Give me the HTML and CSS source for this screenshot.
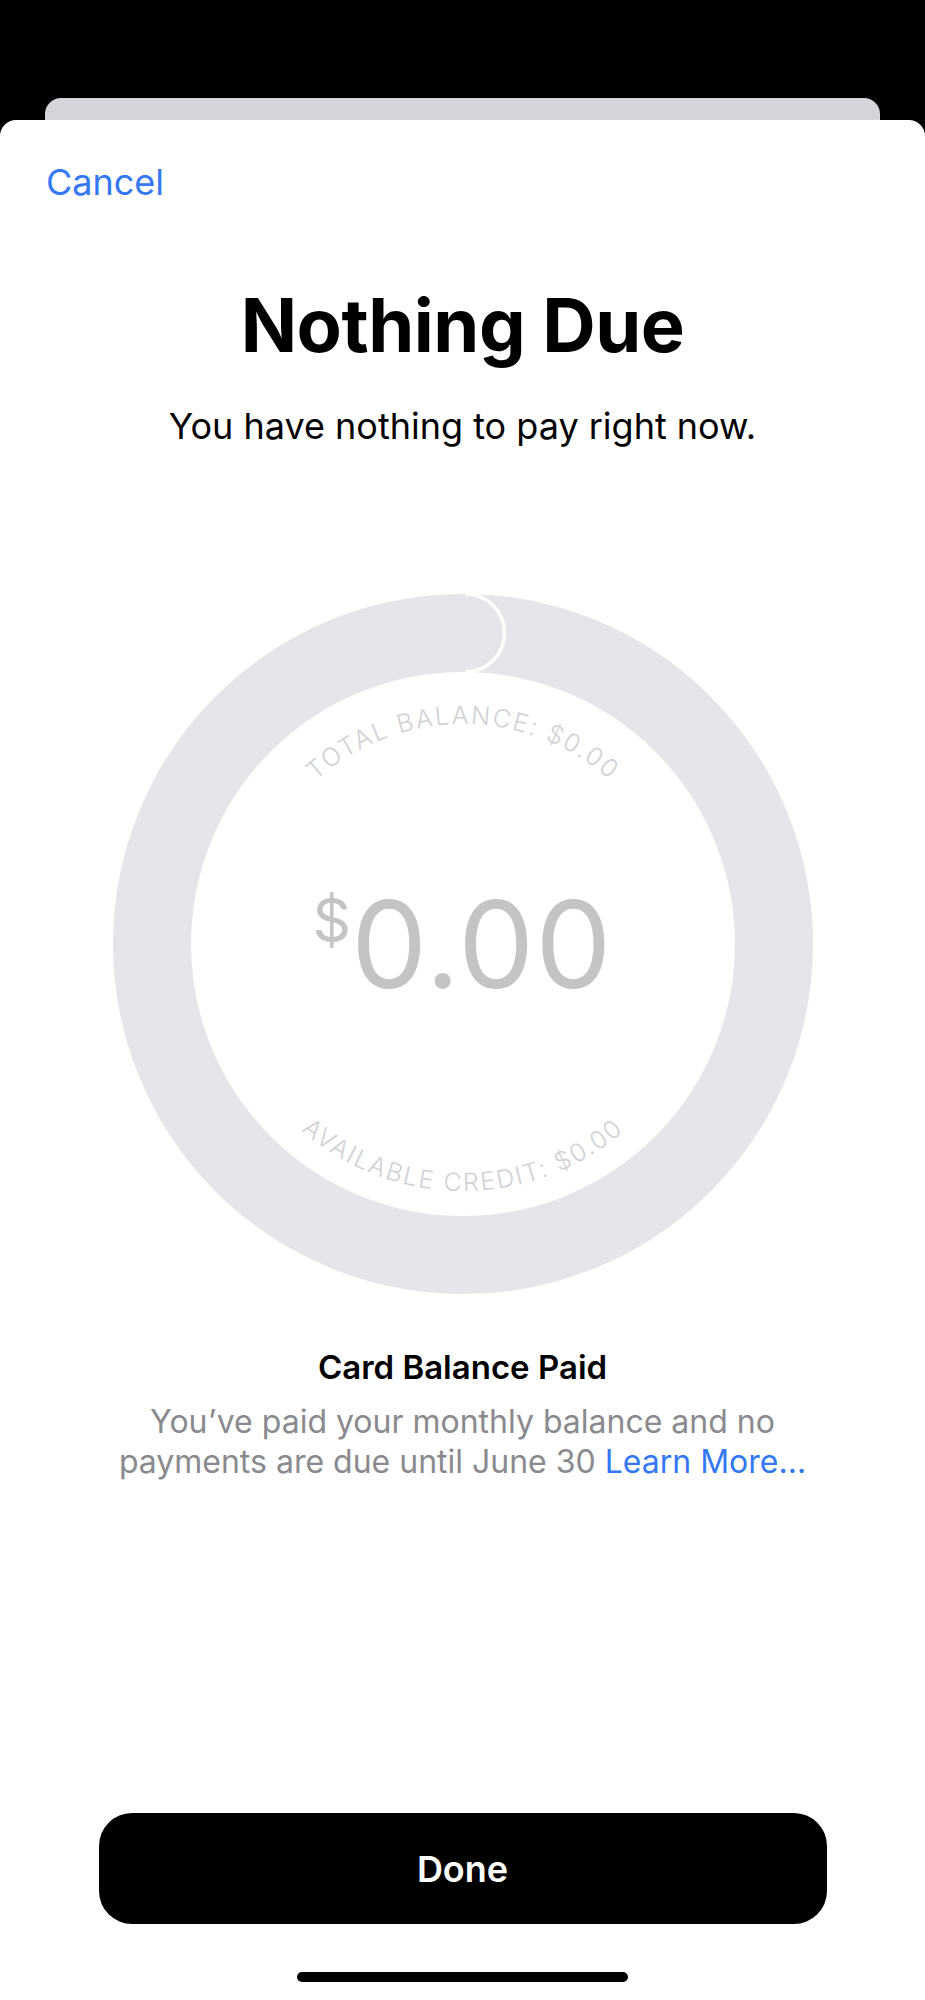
FILE: index.html
```html
<!DOCTYPE html>
<html>
<head>
    <title>Nothing Due</title>
    <link rel="stylesheet" href="styles.css">
</head>
<body>
    <div class="back-card"></div>
    <main class="sheet">
        <div class="sheet-nav">
            <a class="cancel" href="#">Cancel</a>
        </div>

        <h1 class="title">Nothing Due</h1>
        <p class="subtitle">You have nothing to pay right now.</p>

        <!-- Balance ring with curved labels -->
        <div class="ring-wrap">
            <svg class="ring" width="704" height="704" viewBox="0 0 704 704">
                <defs>
                    <path id="arc-top" d="M 132 352 A 220 220 0 0 1 572 352" />
                    <path id="arc-bottom" d="M 105 352 A 247 247 0 0 0 599 352" />
                </defs>
                <circle cx="352" cy="352" r="311" fill="none" stroke="#e5e5ea" stroke-width="78" />
                <!-- round end of the progress arc -->
                <path d="M 354.5 2 A 39 39 0 0 1 354.5 80 Z" fill="#e5e5ea" />
                <path d="M 354.5 2 A 39 39 0 0 1 354.5 80" fill="none" stroke="#ffffff" stroke-width="3.5" />
                <text class="ring-label">
                    <textPath href="#arc-top" startOffset="50%" text-anchor="middle">TOTAL BALANCE: $0.00</textPath>
                </text>
                <text class="ring-label">
                    <textPath href="#arc-bottom" startOffset="50%" text-anchor="middle">AVAILABLE CREDIT: $0.00</textPath>
                </text>
            </svg>
            <div class="amount"><span class="currency">$</span>0.00</div>
        </div>

        <h2 class="status-title">Card Balance Paid</h2>
        <p class="status-text">You’ve paid your monthly balance and no payments are due until June 30 <a href="#">Learn More...</a></p>

        <button class="done">Done</button>
        <div class="home-indicator"></div>
    </main>
</body>
</html>
```

FILE: styles.css
```css
body {
    margin: 0;
    background-color: #000;
    font-family: Inter, "Noto Sans", sans-serif;
    color: #000;
}

.back-card {
    margin: 98px 45px 0;
    height: 22px;
    background-color: #d5d5da;
    border-radius: 16px 16px 0 0;
}

.sheet {
    background-color: #fff;
    border-radius: 16px 16px 0 0;
    min-height: 1880px;
    padding-top: 40px;
    box-sizing: border-box;
    display: flex;
    flex-direction: column;
    align-items: center;
}

.sheet-nav {
    align-self: stretch;
    padding-left: 46px;
    height: 44px;
}

.cancel {
    font-size: 36px;
    line-height: 44px;
    color: #3478f6;
    text-decoration: none;
}

.title {
    margin: 77px 0 0;
    font-size: 74px;
    line-height: 88px;
    font-weight: 700;
    letter-spacing: -0.5px;
}

.subtitle {
    margin: 35px 0 0;
    font-size: 36px;
    line-height: 44px;
}

.ring-wrap {
    margin-top: 144px;
    display: grid;
    place-items: center;
}

.ring,
.amount {
    grid-area: 1 / 1;
}

.ring {
    display: block;
}

.ring-label {
    font-size: 25px;
    font-weight: 300;
    fill: #d1d1d6;
    letter-spacing: 2px;
}

/* Big amount in the middle of the ring */
.amount {
    display: flex;
    align-items: flex-start;
    font-size: 121px;
    line-height: 120px;
    color: #c4c4c6;
    letter-spacing: 1px;
}

.currency {
    font-size: 60px;
    line-height: 60px;
    margin-top: 6px;
    margin-right: -1px;
}

.status-title {
    margin: 52px 0 0;
    font-size: 33px;
    line-height: 38px;
    font-weight: 600;
}

.status-text {
    margin: 16px 0 0;
    width: 720px;
    text-align: center;
    font-size: 32px;
    line-height: 40px;
    color: #8a8a8e;
}

.status-text a {
    color: #3478f6;
    text-decoration: none;
}

.done {
    margin-top: auto;
    width: 728px;
    height: 111px;
    border: none;
    border-radius: 33px;
    background-color: #000;
    color: #fff;
    font-family: inherit;
    font-size: 36px;
    font-weight: 600;
}

.home-indicator {
    margin: 48px 0 18px;
    width: 331px;
    height: 10px;
    border-radius: 5px;
    background-color: #000;
}
```
